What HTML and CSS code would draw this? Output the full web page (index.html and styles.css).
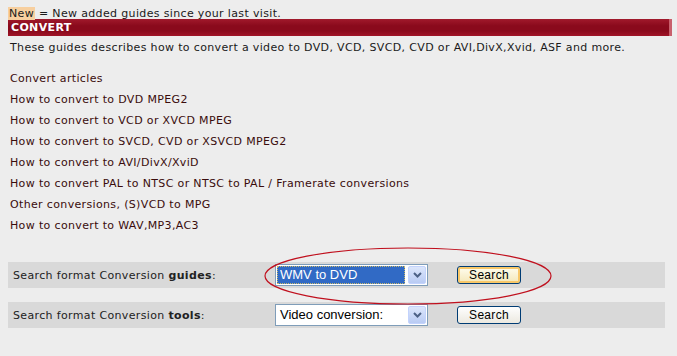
FILE: index.html
```html
<!DOCTYPE html>
<html lang="en">
<head>
  <meta charset="UTF-8" />
  <title>Convert guides</title>
  <link rel="stylesheet" href="styles.css">
</head>
<body>
  <div class="page">
    <p class="legend"><span class="new">New</span> = New added guides since your last visit.</p>
    <div class="section-bar">CONVERT</div>
    <p class="intro">These guides describes how to convert a video to DVD, VCD, SVCD, CVD or AVI,DivX,Xvid, ASF and more.</p>

    <ul class="guides">
      <li><a href="#">Convert articles</a></li>
      <li><a href="#">How to convert to DVD MPEG2</a></li>
      <li><a href="#">How to convert to VCD or XVCD MPEG</a></li>
      <li><a href="#">How to convert to SVCD, CVD or XSVCD MPEG2</a></li>
      <li><a href="#">How to convert to AVI/DivX/XviD</a></li>
      <li><a href="#">How to convert PAL to NTSC or NTSC to PAL / Framerate conversions</a></li>
      <li><a href="#">Other conversions, (S)VCD to MPG</a></li>
      <li><a href="#">How to convert to WAV,MP3,AC3</a></li>
    </ul>

    <div class="search-row">
      <span class="search-label">Search format Conversion <b>guides</b>:</span>
      <div class="combo">
        <span class="combo-text selected">WMV to DVD</span>
        <span class="combo-btn"><svg width="9" height="6" viewBox="0 0 9 6"><path d="M1 1 L4.5 4.5 L8 1" fill="none" stroke="#4d6185" stroke-width="2"/></svg></span>
      </div>
      <button class="search-btn focused" type="button">Search</button>
    </div>

    <div class="search-row">
      <span class="search-label">Search format Conversion <b>tools</b>:</span>
      <div class="combo">
        <span class="combo-text">Video conversion:</span>
        <span class="combo-btn"><svg width="9" height="6" viewBox="0 0 9 6"><path d="M1 1 L4.5 4.5 L8 1" fill="none" stroke="#4d6185" stroke-width="2"/></svg></span>
      </div>
      <button class="search-btn" type="button">Search</button>
    </div>

    <svg class="circle-mark" width="300" height="62" viewBox="0 0 300 62">
      <ellipse cx="150" cy="31" rx="143" ry="28" fill="none" stroke="#c0101e" stroke-width="1.2"/>
    </svg>
  </div>
</body>
</html>
```

FILE: styles.css
```css
body {
  margin: 0;
  background: #ededed;
  font-family: "DejaVu Sans", Verdana, sans-serif;
  font-size: 11px;
  letter-spacing: 0.35px;
  color: #1a1a1a;
}

.page {
  position: relative;
  padding: 8px 5px 0 8px;
}

.legend {
  margin: 0;
  line-height: 11px;
  height: 11px;
}

.new {
  background: #f7cf9f;
  padding: 0 1px;
}

.section-bar {
  background: linear-gradient(#a11a2c, #8a0a1c 40%, #8a0a1c 70%, #a01427);
  color: #fff;
  font-weight: bold;
  line-height: 17px;
  height: 17px;
  padding-left: 3px;
  border-right: 3px solid #c8606c;
}

.intro {
  margin: 5px 0 0 2px;
  line-height: 14px;
}

.guides {
  list-style: none;
  margin: 13px 0 0 2px;
  padding: 0;
}

.guides li {
  line-height: 21px;
}

.guides a {
  color: #3a0c0c;
  text-decoration: none;
}

.search-row {
  display: flex;
  align-items: center;
  height: 26px;
  background: #d9d9d9;
  padding-left: 5px;
  margin-right: 7px;
}

.search-row + .search-row {
  margin-top: 14px;
}

.guides + .search-row {
  margin-top: 26px;
}

.search-label {
  width: 262px;
  color: #222;
}

.combo {
  display: flex;
  width: 149px;
  height: 18px;
  border: 1px solid #7f9db9;
  background: #fff;
  padding: 1px;
  font-family: "Liberation Sans", Tahoma, sans-serif;
  font-size: 13px;
  letter-spacing: 0;
}

.combo-text {
  flex: 1;
  line-height: 18px;
  padding-left: 3px;
  color: #000;
}

.combo-text.selected {
  background: #316ac5;
  color: #fff;
  outline: 1px dotted #c9b96a;
  outline-offset: -1px;
}

.combo-btn {
  width: 16px;
  margin-left: 3px;
  display: flex;
  align-items: center;
  justify-content: center;
  background: linear-gradient(#dce6fb, #b9cbf3);
  border: 1px solid #c3d3fd;
  border-radius: 2px;
}

.search-btn {
  margin-left: 29px;
  width: 64px;
  height: 18px;
  padding: 0;
  font-family: "Liberation Sans", Tahoma, sans-serif;
  font-size: 12px;
  letter-spacing: 0.3px;
  color: #000;
  background: linear-gradient(#fefefe, #ece9e0);
  border: 1px solid #003c74;
  border-radius: 3px;
}

.search-btn.focused {
  box-shadow: inset 0 0 0 2px #f8c86a;
  background: linear-gradient(#fffdf0, #f4e7b8);
}

.circle-mark {
  position: absolute;
  left: 258px;
  top: 245px;
  pointer-events: none;
}
```
